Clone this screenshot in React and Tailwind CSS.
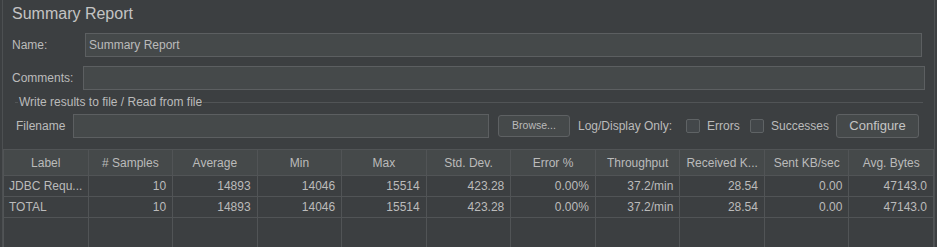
import React from 'react';

const COLUMNS = ['Label', '# Samples', 'Average', 'Min', 'Max', 'Std. Dev.', 'Error %', 'Throughput', 'Received K...', 'Sent KB/sec', 'Avg. Bytes'];

const ROWS = [
  ['JDBC Requ...', '10', '14893', '14046', '15514', '423.28', '0.00%', '37.2/min', '28.54', '0.00', '47143.0'],
  ['TOTAL', '10', '14893', '14046', '15514', '423.28', '0.00%', '37.2/min', '28.54', '0.00', '47143.0'],
];

function Checkbox() {
  return <span className="w-[14px] h-[14px] rounded-[2px] border border-[#5f6365] bg-[#43474a] shrink-0"></span>;
}

export default function App() {
  return (
    <div className="w-[937px] h-[247px] bg-[#3c3f41] overflow-hidden px-[2px] text-[#bbbbbb] font-['Liberation_Sans',Arial,sans-serif]">
      <div className="h-full border-x border-[#4d5052] flex flex-col">
        {/* title */}
        <div className="h-[33px] pl-[9px] pt-[4px] text-[16px] leading-[20px] text-[#c4c4c4]">Summary Report</div>

        {/* name */}
        <div className="h-[24px] flex items-center pl-[9px] pr-[12px] text-[12px]">
          <span className="w-[73px] shrink-0">Name:</span>
          <div className="flex-1 h-full bg-[#45494a] border border-[#5c5f61] flex items-center pl-[3px]">Summary Report</div>
        </div>

        {/* comments */}
        <div className="h-[24px] mt-[9px] flex items-center pl-[9px] pr-[9px] text-[12px]">
          <span className="w-[71px] shrink-0">Comments:</span>
          <div className="flex-1 h-full bg-[#45494a] border border-[#5c5f61]"></div>
        </div>

        {/* write results group */}
        <div className="h-[14px] mt-[5px] ml-[12px] mr-[11px] flex items-center text-[12px] leading-[14px]">
          <span className="w-[3px] h-px bg-[#515456]"></span>
          <span className="px-[1px]">Write results to file / Read from file</span>
          <span className="flex-1 h-px bg-[#515456]"></span>
        </div>

        {/* filename row */}
        <div className="h-[24px] mt-[5px] flex items-center pl-[13px] text-[12px]">
          <span className="w-[57px] shrink-0">Filename</span>
          <div className="w-[416px] h-full bg-[#45494a] border border-[#5c5f61] shrink-0"></div>
          <button className="ml-[9px] w-[72px] h-[22px] rounded-[3px] bg-[#45494a] border border-[#5e6163] text-[10.5px] shrink-0">Browse...</button>
          <span className="ml-[8px] w-[108px] shrink-0 whitespace-nowrap">Log/Display Only:</span>
          <Checkbox />
          <span className="ml-[7px] w-[43px] shrink-0">Errors</span>
          <Checkbox />
          <span className="ml-[7px] w-[65px] shrink-0">Successes</span>
          <button className="w-[83px] h-[24px] rounded-[3px] bg-[#45494a] border border-[#5e6163] text-[13px] text-[#c4c4c4] shrink-0">Configure</button>
        </div>

        {/* table */}
        <div className="mt-[11px] w-[931px] flex-1 flex flex-col border-l border-t border-[#515456] text-[12px]">
          <div className="grid grid-cols-11 h-[26px] bg-[#45494a] border-b border-[#515456]">
            {COLUMNS.map((c, i) => (
              <div key={i} className="border-r border-[#515456] flex items-center justify-center whitespace-nowrap">{c}</div>
            ))}
          </div>
          {ROWS.map((row, r) => (
            <div key={r} className="grid grid-cols-11 h-[21px] border-b border-[#515456]">
              {row.map((v, i) => (
                <div key={i} className={`border-r border-[#515456] flex items-center whitespace-nowrap ${i === 0 ? 'justify-start pl-[5px]' : 'justify-end pr-[6px]'}`}>{v}</div>
              ))}
            </div>
          ))}
          <div className="grid grid-cols-11 flex-1">
            {COLUMNS.map((c, i) => (
              <div key={i} className="border-r border-[#515456]"></div>
            ))}
          </div>
        </div>
      </div>
    </div>
  );
}
